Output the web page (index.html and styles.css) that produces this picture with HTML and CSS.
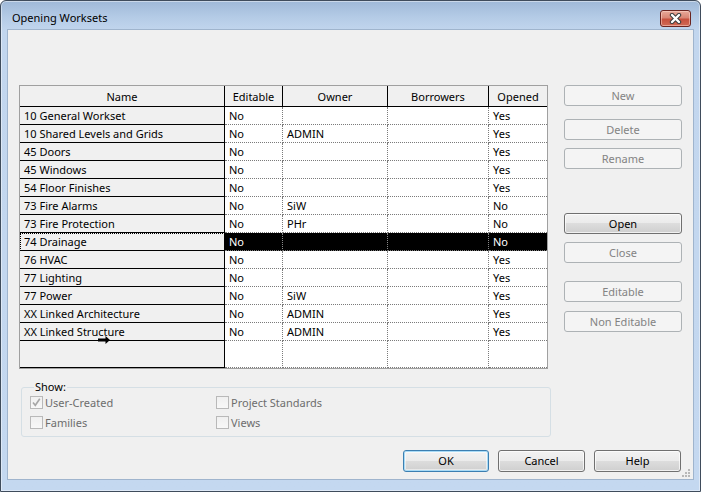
FILE: index.html
```html
<!DOCTYPE html>
<html>
<head>
<meta charset="utf-8">
<title>Opening Worksets</title>
<link rel="stylesheet" href="styles.css">
</head>
<body>
<div class="window">
  <div class="titlebar">
    <span class="title">Opening Worksets</span>
    <span class="close-btn">
      <svg width="17" height="11" viewBox="0 0 17 11">
        <path d="M5 2 L12 9 M12 2 L5 9" stroke="#3d3d3d" stroke-width="4.4" stroke-linecap="round"/>
        <path d="M5 2 L12 9 M12 2 L5 9" stroke="#ffffff" stroke-width="2.4" stroke-linecap="round"/>
      </svg>
    </span>
  </div>
  <div class="client">
    <div class="main">
      <div class="grid-wrap">
        <table class="grid">
          <colgroup>
            <col class="c-name"><col class="c-edit"><col class="c-owner"><col class="c-borrow"><col class="c-open">
          </colgroup>
          <thead>
            <tr><th>Name</th><th>Editable</th><th>Owner</th><th>Borrowers</th><th class="last">Opened</th></tr>
          </thead>
          <tbody>
            <tr><td class="name">10 General Workset</td><td>No</td><td></td><td></td><td class="last">Yes</td></tr>
            <tr><td class="name">10 Shared Levels and Grids</td><td>No</td><td>ADMIN</td><td></td><td class="last">Yes</td></tr>
            <tr><td class="name">45 Doors</td><td>No</td><td></td><td></td><td class="last">Yes</td></tr>
            <tr><td class="name">45 Windows</td><td>No</td><td></td><td></td><td class="last">Yes</td></tr>
            <tr><td class="name">54 Floor Finishes</td><td>No</td><td></td><td></td><td class="last">Yes</td></tr>
            <tr><td class="name">73 Fire Alarms</td><td>No</td><td>SiW</td><td></td><td class="last">No</td></tr>
            <tr><td class="name">73 Fire Protection</td><td>No</td><td>PHr</td><td></td><td class="last">No</td></tr>
            <tr class="selected"><td class="name">74 Drainage</td><td>No</td><td></td><td></td><td class="last">No</td></tr>
            <tr><td class="name">76 HVAC</td><td>No</td><td></td><td></td><td class="last">Yes</td></tr>
            <tr><td class="name">77 Lighting</td><td>No</td><td></td><td></td><td class="last">Yes</td></tr>
            <tr><td class="name">77 Power</td><td>No</td><td>SiW</td><td></td><td class="last">Yes</td></tr>
            <tr><td class="name">XX Linked Architecture</td><td>No</td><td>ADMIN</td><td></td><td class="last">Yes</td></tr>
            <tr><td class="name">XX Linked Structure</td><td>No</td><td>ADMIN</td><td></td><td class="last">Yes</td></tr>
            <tr class="empty"><td class="name"></td><td></td><td></td><td></td><td class="last"></td></tr>
          </tbody>
        </table>
        <svg class="cursor" width="13" height="8" viewBox="0 0 13 8">
          <path d="M0 2.5 H7.5 V0 L12 4 L7.5 8 V5.5 H0 Z" fill="#000"/>
        </svg>
      </div>
      <div class="side">
        <div class="btn-group">
          <button class="btn disabled">New</button>
        </div>
        <div class="btn-group g-delete">
          <button class="btn disabled">Delete</button>
          <button class="btn disabled">Rename</button>
        </div>
        <div class="btn-group g-open">
          <button class="btn">Open</button>
          <button class="btn disabled">Close</button>
        </div>
        <div class="btn-group g-edit">
          <button class="btn disabled">Editable</button>
          <button class="btn disabled">Non Editable</button>
        </div>
      </div>
    </div>

    <fieldset class="show">
      <legend>Show:</legend>
      <div class="checks">
        <label class="check">
          <span class="box">
            <svg width="11" height="11" viewBox="0 0 11 11"><path d="M2 5.5 L4.3 8.3 L8.8 1.8" fill="none" stroke="#a7a7a7" stroke-width="1.6"/></svg>
          </span>User-Created
        </label>
        <label class="check"><span class="box"></span>Project Standards</label>
        <label class="check"><span class="box"></span>Families</label>
        <label class="check"><span class="box"></span>Views</label>
      </div>
    </fieldset>

    <div class="footer">
      <button class="btn dlg default">OK</button>
      <button class="btn dlg wide">Cancel</button>
      <button class="btn dlg wide">Help</button>
    </div>

    <svg class="grip" width="10" height="10" viewBox="0 0 10 10">
      <rect x="7" y="1" width="2" height="2" fill="#b8b8b8"/>
      <rect x="4" y="4" width="2" height="2" fill="#b8b8b8"/>
      <rect x="7" y="4" width="2" height="2" fill="#b8b8b8"/>
      <rect x="1" y="7" width="2" height="2" fill="#b8b8b8"/>
      <rect x="4" y="7" width="2" height="2" fill="#b8b8b8"/>
      <rect x="7" y="7" width="2" height="2" fill="#b8b8b8"/>
    </svg>
  </div>
</div>
</body>
</html>
```

FILE: styles.css
```css
* {
  box-sizing: border-box;
}

html, body {
  margin: 0;
  padding: 0;
  background: #ffffff;
}

body {
  font-family: "Noto Sans", "Open Sans", "Liberation Sans", sans-serif;
  font-size: 11px;
  color: #000;
}

.window {
  width: 701px;
  height: 492px;
  border: 1px solid #3f4c5c;
  border-radius: 6px 6px 0 0;
  background: linear-gradient(#9fb9d8 0px, #b4cbe6 16px, #c2d6ee 30px, #c4d8f0 100%);
  box-shadow: inset 0 0 0 1px rgba(255, 255, 255, 0.45);
  display: flex;
  flex-direction: column;
  overflow: hidden;
}

.titlebar {
  height: 29px;
  flex: none;
  display: flex;
  align-items: flex-start;
  padding: 0 9px 0 11px;
}

.title {
  margin-top: 9px;
  font-size: 11px;
  line-height: 16px;
  color: #000;
}

.close-btn {
  margin-left: auto;
  margin-top: 9px;
  width: 31px;
  height: 17px;
  border: 1px solid #6a2420;
  border-radius: 3px;
  background: linear-gradient(#e8a99a 0%, #d98675 45%, #c7513e 55%, #d06a56 100%);
  box-shadow: inset 0 0 0 1px rgba(255, 220, 210, 0.5);
  display: flex;
  align-items: center;
  justify-content: center;
}

.client {
  position: relative;
  flex: none;
  margin: 0 7px;
  height: 449px;
  background: #f0f0f0;
  box-shadow: 0 0 0 1px #9fb4cd;
  padding: 55px 12px 0 11px;
}

.main {
  display: flex;
  align-items: flex-start;
  gap: 16px;
}

.grid-wrap {
  position: relative;
  width: 529px;
  border: 1px solid #a0a0a0;
  background: #fff;
}

.grid {
  width: 527px;
  table-layout: fixed;
  border-collapse: separate;
  border-spacing: 0;
  font-size: 11px;
}

.c-name { width: 205px; }
.c-edit { width: 58px; }
.c-owner { width: 105px; }
.c-borrow { width: 101px; }
.c-open { width: 58px; }

.grid th {
  height: 21px;
  font-weight: normal;
  text-align: center;
  background: #f0f0f0;
  border-right: 1px solid #000;
  border-bottom: 1px solid #000;
  padding: 1px 0 0 0;
  line-height: 19px;
  white-space: nowrap;
}

.grid td {
  height: 18px;
  padding: 0 0 0 4px;
  line-height: 17px;
  border-right: 1px dotted #7a7a7a;
  border-bottom: 1px dotted #7a7a7a;
  white-space: nowrap;
  overflow: hidden;
  background: #fff;
}

.grid th.last,
.grid td.last {
  border-right: none;
}

.grid td.name {
  background: #f0f0f0;
  border-right: 1px solid #000;
  border-bottom: 1px solid #000;
}

.grid tr.selected td {
  background: #000;
  color: #fff;
  border-right-color: #8a8a8a;
}

.grid tr.selected td.name {
  background: #f0f0f0;
  color: #000;
  outline: 1px dotted #000;
  outline-offset: -1px;
  border-right-color: #000;
}

.grid tr.empty td {
  height: 27px;
}

.cursor {
  position: absolute;
  left: 78px;
  top: 250px;
}

.side {
  width: 118px;
  display: flex;
  flex-direction: column;
}

.btn-group {
  display: flex;
  flex-direction: column;
  gap: 8px;
}

.g-delete { margin-top: 13px; }
.g-open { margin-top: 44px; }
.g-edit { margin-top: 18px; gap: 9px; }

.btn {
  font-family: inherit;
  font-size: 11px;
  height: 21px;
  width: 118px;
  padding: 0;
  margin: 0;
  line-height: 19px;
  border: 1px solid #707070;
  border-radius: 3px;
  color: #000;
  background: linear-gradient(#f2f2f2 0%, #ebebeb 49%, #dddddd 50%, #cfcfcf 100%);
  box-shadow: inset 0 0 0 1px rgba(255, 255, 255, 0.7);
}

.btn.disabled {
  border-color: #adb2b5;
  background: #f4f4f4;
  color: #838383;
  box-shadow: none;
}

.show {
  margin: 11px 0 0 2px;
  width: 530px;
  border: 1px solid #d5dfe5;
  border-radius: 3px;
  padding: 2px 8px 7px 8px;
}

.show legend {
  padding: 0 1px;
  margin-left: 4px;
  font-size: 11px;
  line-height: 14px;
}

.checks {
  display: grid;
  grid-template-columns: 186px 1fr;
  row-gap: 7px;
}

.check {
  display: flex;
  align-items: center;
  height: 13px;
  color: #6d6d6d;
  font-size: 11px;
  line-height: 13px;
  gap: 2px;
}

.box {
  width: 13px;
  height: 13px;
  border: 1px solid #b9b9b9;
  background: linear-gradient(#f0f0f0, #f8f8f8);
  display: flex;
  align-items: center;
  justify-content: center;
  flex: none;
}

.footer {
  margin-top: 13px;
  display: flex;
  justify-content: flex-end;
  gap: 9px;
}

.btn.dlg {
  width: 86px;
  height: 22px;
  line-height: 20px;
}

.btn.dlg.wide {
  width: 87px;
}

.btn.default {
  border-color: #3c7fb1;
  box-shadow: inset 0 0 0 1px #a9dbf6, inset 0 0 0 2px rgba(255, 255, 255, 0.5);
}

.grip {
  position: absolute;
  right: 2px;
  bottom: 1px;
}
```
